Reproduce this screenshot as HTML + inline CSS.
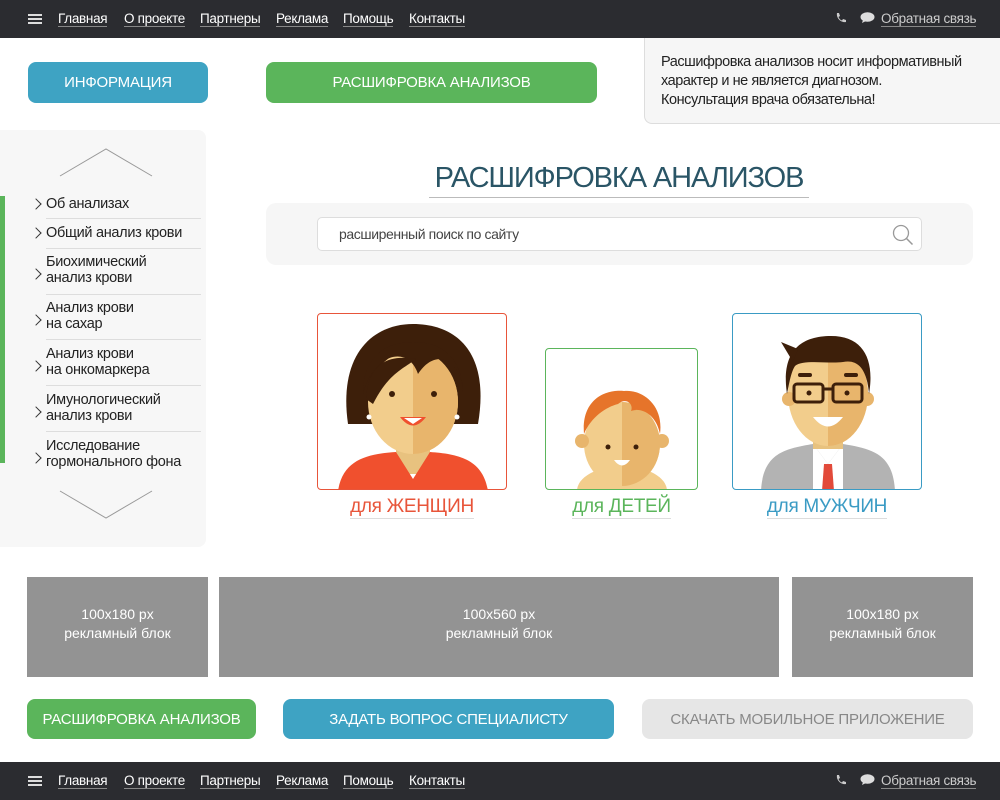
<!DOCTYPE html>
<html><head><meta charset="utf-8"><style>
*{margin:0;padding:0;box-sizing:border-box}
body{width:1000px;height:800px;position:relative;background:#fff;font-family:"Liberation Sans",sans-serif;overflow:hidden}
.bar{position:absolute;left:0;width:1000px;height:38px;background:#2b2c30;color:#fff;font-size:13.5px}
.bar .ham{position:absolute;left:28px;top:14px;width:14px;height:2px;background:#ddd;box-shadow:0 4px 0 #ddd,0 8px 0 #ddd}
.bar a{position:absolute;top:11px;color:#fff;text-decoration:none;border-bottom:1px solid #888;line-height:15px;letter-spacing:-0.3px}
.bar .fb{color:#ccc}
.btn{position:absolute;border-radius:8px;color:#fff;font-size:15px;text-align:center;letter-spacing:-0.2px}
.side{position:absolute;left:0;top:130px;width:206px;height:417px;background:#f7f7f7;border-radius:0 8px 8px 0}
.side .it{position:absolute;left:46px;width:160px;font-size:14.5px;color:#222;line-height:16px;letter-spacing:-0.3px;white-space:nowrap}
.side .ln{position:absolute;left:46px;width:155px;height:1px;background:#ddd}
.side .ch{position:absolute;left:32px;width:8px;height:8px;border-right:1px solid #333;border-top:1px solid #333;transform:rotate(45deg)}
.ad{position:absolute;top:577px;height:100px;background:#939393;color:#fff;text-align:center;font-size:14px;line-height:19px;padding-top:28px}
.card{position:absolute;border:1px solid;border-radius:4px;overflow:hidden;background:#fff}
.lab{position:absolute;font-size:19px;text-align:center;letter-spacing:-0.3px}
.lab span{border-bottom:1px solid #ddd;padding-bottom:1px}
</style></head><body>
<div class="bar" style="top:0">
<div class="ham"></div>
<a style="left:58px">Главная</a><a style="left:124px">О проекте</a><a style="left:200px">Партнеры</a><a style="left:276px">Реклама</a><a style="left:343px">Помощь</a><a style="left:409px">Контакты</a>
<svg style="position:absolute;left:835px;top:12px" width="12" height="12" viewBox="0 0 12 12"><path d="M2 1l2 0 1 3-1.5 1c1 2 2 3 3.5 3.5l1-1.5 3 1v2c-5 1-10-4-9-9z" fill="#ccc"/></svg>
<svg style="position:absolute;left:860px;top:12px" width="15" height="12" viewBox="0 0 15 12"><ellipse cx="7.5" cy="5" rx="7" ry="4.8" fill="#ddd"/><path d="M3 8l-1 3 4-2z" fill="#ddd"/></svg>
<a class="fb" style="left:881px">Обратная связь</a>
</div>

<div class="btn" style="left:28px;top:62px;width:180px;height:41px;background:#3ea3c3;line-height:42px">ИНФОРМАЦИЯ</div>
<div class="btn" style="left:266px;top:62px;width:331px;height:41px;background:#5bb55b;line-height:42px">РАСШИФРОВКА АНАЛИЗОВ</div>

<div style="position:absolute;left:644px;top:38px;width:356px;height:86px;background:#f6f6f6;border:1px solid #ddd;border-top:none;border-right:none;border-radius:0 0 0 8px;padding:15px 0 0 16px;font-size:14.5px;line-height:19px;color:#222;letter-spacing:-0.45px">Расшифровка анализов носит информативный характер и не является диагнозом.<br>Консультация врача обязательна!</div>

<div class="side">
<svg style="position:absolute;left:58px;top:17px" width="96" height="30"><path d="M2 29L48 2L94 29" stroke="#999" fill="none"/></svg>
<svg style="position:absolute;left:58px;top:360px" width="96" height="30"><path d="M2 1L48 28L94 1" stroke="#999" fill="none"/></svg>
</div>
<div style="position:absolute;left:0;top:196px;width:5px;height:267px;background:#5bb55b"></div>
<div style="position:absolute;left:0;top:130px">
<div class="side" style="top:0;background:none">
<div class="ch" style="top:70px"></div><div class="it" style="top:66px">Об анализах</div><div class="ln" style="top:88px"></div>
<div class="ch" style="top:99px"></div><div class="it" style="top:95px">Общий анализ крови</div><div class="ln" style="top:118px"></div>
<div class="ch" style="top:140px"></div><div class="it" style="top:124px">Биохимический<br>анализ крови</div><div class="ln" style="top:164px"></div>
<div class="ch" style="top:186px"></div><div class="it" style="top:170px">Анализ крови<br>на сахар</div><div class="ln" style="top:209px"></div>
<div class="ch" style="top:232px"></div><div class="it" style="top:216px">Анализ крови<br>на онкомаркера</div><div class="ln" style="top:255px"></div>
<div class="ch" style="top:278px"></div><div class="it" style="top:262px">Имунологический<br>анализ крови</div><div class="ln" style="top:301px"></div>
<div class="ch" style="top:324px"></div><div class="it" style="top:308px">Исследование<br>гормонального фона</div>
</div></div>

<div style="position:absolute;left:429px;top:160px;width:380px;font-size:29px;color:#2a5566;letter-spacing:-1.1px;white-space:nowrap;border-bottom:1px solid #bbb;line-height:37px;text-align:center">РАСШИФРОВКА АНАЛИЗОВ</div>
<div style="position:absolute;left:266px;top:203px;width:707px;height:62px;background:#f6f6f6;border-radius:10px"></div>
<div style="position:absolute;left:317px;top:217px;width:605px;height:34px;background:#fff;border:1px solid #ddd;border-radius:5px;font-size:14px;color:#444;line-height:32px;padding-left:21px;letter-spacing:-0.4px">расширенный поиск по сайту
<svg style="position:absolute;right:6px;top:6px" width="24" height="22"><circle cx="10" cy="9" r="7.5" stroke="#999" fill="none" stroke-width="1.3"/><path d="M15.5 14.5l6 6" stroke="#999" stroke-width="1.5"/></svg></div>

<div class="card" style="left:317px;top:313px;width:190px;height:177px;border-color:#e8553a">
<svg width="190" height="177" viewBox="0 0 190 177">
<path d="M30 110C20 40 55 10 95 10C140 10 172 40 160 110Z" fill="#3d1f0a"/>
<rect x="78" y="120" width="34" height="40" fill="#e8c27f"/>
<path d="M20 177C25 145 50 140 78 138L95 165L112 138C140 140 165 145 170 177Z" fill="#f0502e"/>
<ellipse cx="95" cy="88" rx="45" ry="52" fill="#f2cd8c"/>
<path d="M95 36A45 52 0 0 1 95 140Z" fill="#e8b56c"/>
<path d="M45 80C55 40 90 30 100 60C120 30 145 50 145 80C145 50 130 28 95 28C60 28 45 50 45 80Z" fill="#3d1f0a"/>
<path d="M48 85C50 50 70 40 98 45C85 55 70 60 55 90Z" fill="#3d1f0a"/>
<circle cx="74" cy="80" r="3" fill="#3d1f0a"/><circle cx="116" cy="80" r="3" fill="#3d1f0a"/>
<path d="M82 103Q95 120 108 103Z" fill="#f0502e"/><path d="M86 104H104L95 110Z" fill="#fff"/>
<circle cx="51" cy="103" r="2.5" fill="#fff"/><circle cx="139" cy="103" r="2.5" fill="#fff"/>
</svg></div>
<div class="lab" style="left:317px;top:496px;width:190px;color:#e8553a"><span>для ЖЕНЩИН</span></div>

<div class="card" style="left:545px;top:348px;width:153px;height:142px;border-color:#5bb55b">
<svg width="153" height="142" viewBox="0 0 153 142">
<ellipse cx="76" cy="142" rx="45" ry="25" fill="#f2cd8c"/>
<ellipse cx="76" cy="95" rx="38" ry="42" fill="#f2cd8c"/>
<path d="M76 53A38 42 0 0 1 76 137Z" fill="#e8b56c"/>
<circle cx="36" cy="92" r="7" fill="#e8b56c"/><circle cx="116" cy="92" r="7" fill="#e8b56c"/>
<path d="M38 85C35 50 60 40 78 42C95 40 118 55 114 85C110 65 95 58 85 62C88 55 80 48 72 55C60 58 45 68 38 85Z" fill="#e6742a"/>
<circle cx="62" cy="98" r="2.5" fill="#3d1f0a"/><circle cx="90" cy="98" r="2.5" fill="#3d1f0a"/>
<path d="M68 111Q76 122 84 111Z" fill="#fff"/>
</svg></div>
<div class="lab" style="left:545px;top:496px;width:153px;color:#5bb55b"><span>для ДЕТЕЙ</span></div>

<div class="card" style="left:732px;top:313px;width:190px;height:177px;border-color:#3a9bc4">
<svg width="190" height="177" viewBox="0 0 190 177">
<path d="M28 177C30 140 50 135 80 130L95 150L110 130C140 135 160 140 162 177Z" fill="#b3b3b3"/>
<path d="M80 130L95 150L110 130L110 177H80Z" fill="#fff"/>
<path d="M91 150H99L101 177H89Z" fill="#e24a3a"/>
<rect x="80" y="110" width="30" height="25" fill="#e8c27f"/>
<ellipse cx="95" cy="80" rx="40" ry="52" fill="#f2cd8c"/>
<path d="M95 28A40 52 0 0 1 95 132Z" fill="#e8b56c"/>
<circle cx="56" cy="85" r="7" fill="#e8b56c"/><circle cx="134" cy="85" r="7" fill="#e8b56c"/>
<path d="M54 80C48 40 65 22 98 22C130 22 142 45 136 80C134 55 125 45 110 48C95 50 70 45 62 52C58 58 56 70 54 80Z" fill="#3d1f0a"/>
<path d="M48 28L65 35L60 48Z" fill="#3d1f0a"/>
<rect x="61" y="70" width="29" height="18" rx="3" fill="none" stroke="#3d1f0a" stroke-width="3"/>
<rect x="100" y="70" width="29" height="18" rx="3" fill="none" stroke="#3d1f0a" stroke-width="3"/>
<path d="M90 75H100" stroke="#3d1f0a" stroke-width="3"/>
<rect x="65" y="59" width="14" height="4" rx="2" fill="#3d1f0a"/><rect x="111" y="59" width="14" height="4" rx="2" fill="#3d1f0a"/>
<circle cx="76" cy="79" r="2.5" fill="#3d1f0a"/><circle cx="114" cy="79" r="2.5" fill="#3d1f0a"/>
<path d="M80 103Q95 122 110 103Z" fill="#fff"/>
</svg></div>
<div class="lab" style="left:732px;top:496px;width:190px;color:#3a9bc4"><span>для МУЖЧИН</span></div>

<div class="ad" style="left:27px;width:181px">100x180 px<br>рекламный блок</div>
<div class="ad" style="left:219px;width:560px">100x560 px<br>рекламный блок</div>
<div class="ad" style="left:792px;width:181px">100x180 px<br>рекламный блок</div>

<div class="btn" style="left:27px;top:699px;width:229px;height:40px;background:#5bb55b;line-height:41px">РАСШИФРОВКА АНАЛИЗОВ</div>
<div class="btn" style="left:283px;top:699px;width:331px;height:40px;background:#3ea3c3;line-height:41px">ЗАДАТЬ ВОПРОС СПЕЦИАЛИСТУ</div>
<div class="btn" style="left:642px;top:699px;width:331px;height:40px;background:#e6e6e6;color:#888;line-height:41px">СКАЧАТЬ МОБИЛЬНОЕ ПРИЛОЖЕНИЕ</div>

<div class="bar" style="top:762px">
<div class="ham"></div>
<a style="left:58px">Главная</a><a style="left:124px">О проекте</a><a style="left:200px">Партнеры</a><a style="left:276px">Реклама</a><a style="left:343px">Помощь</a><a style="left:409px">Контакты</a>
<svg style="position:absolute;left:835px;top:12px" width="12" height="12" viewBox="0 0 12 12"><path d="M2 1l2 0 1 3-1.5 1c1 2 2 3 3.5 3.5l1-1.5 3 1v2c-5 1-10-4-9-9z" fill="#ccc"/></svg>
<svg style="position:absolute;left:860px;top:12px" width="15" height="12" viewBox="0 0 15 12"><ellipse cx="7.5" cy="5" rx="7" ry="4.8" fill="#ddd"/><path d="M3 8l-1 3 4-2z" fill="#ddd"/></svg>
<a class="fb" style="left:881px">Обратная связь</a>
</div>
</body></html>
